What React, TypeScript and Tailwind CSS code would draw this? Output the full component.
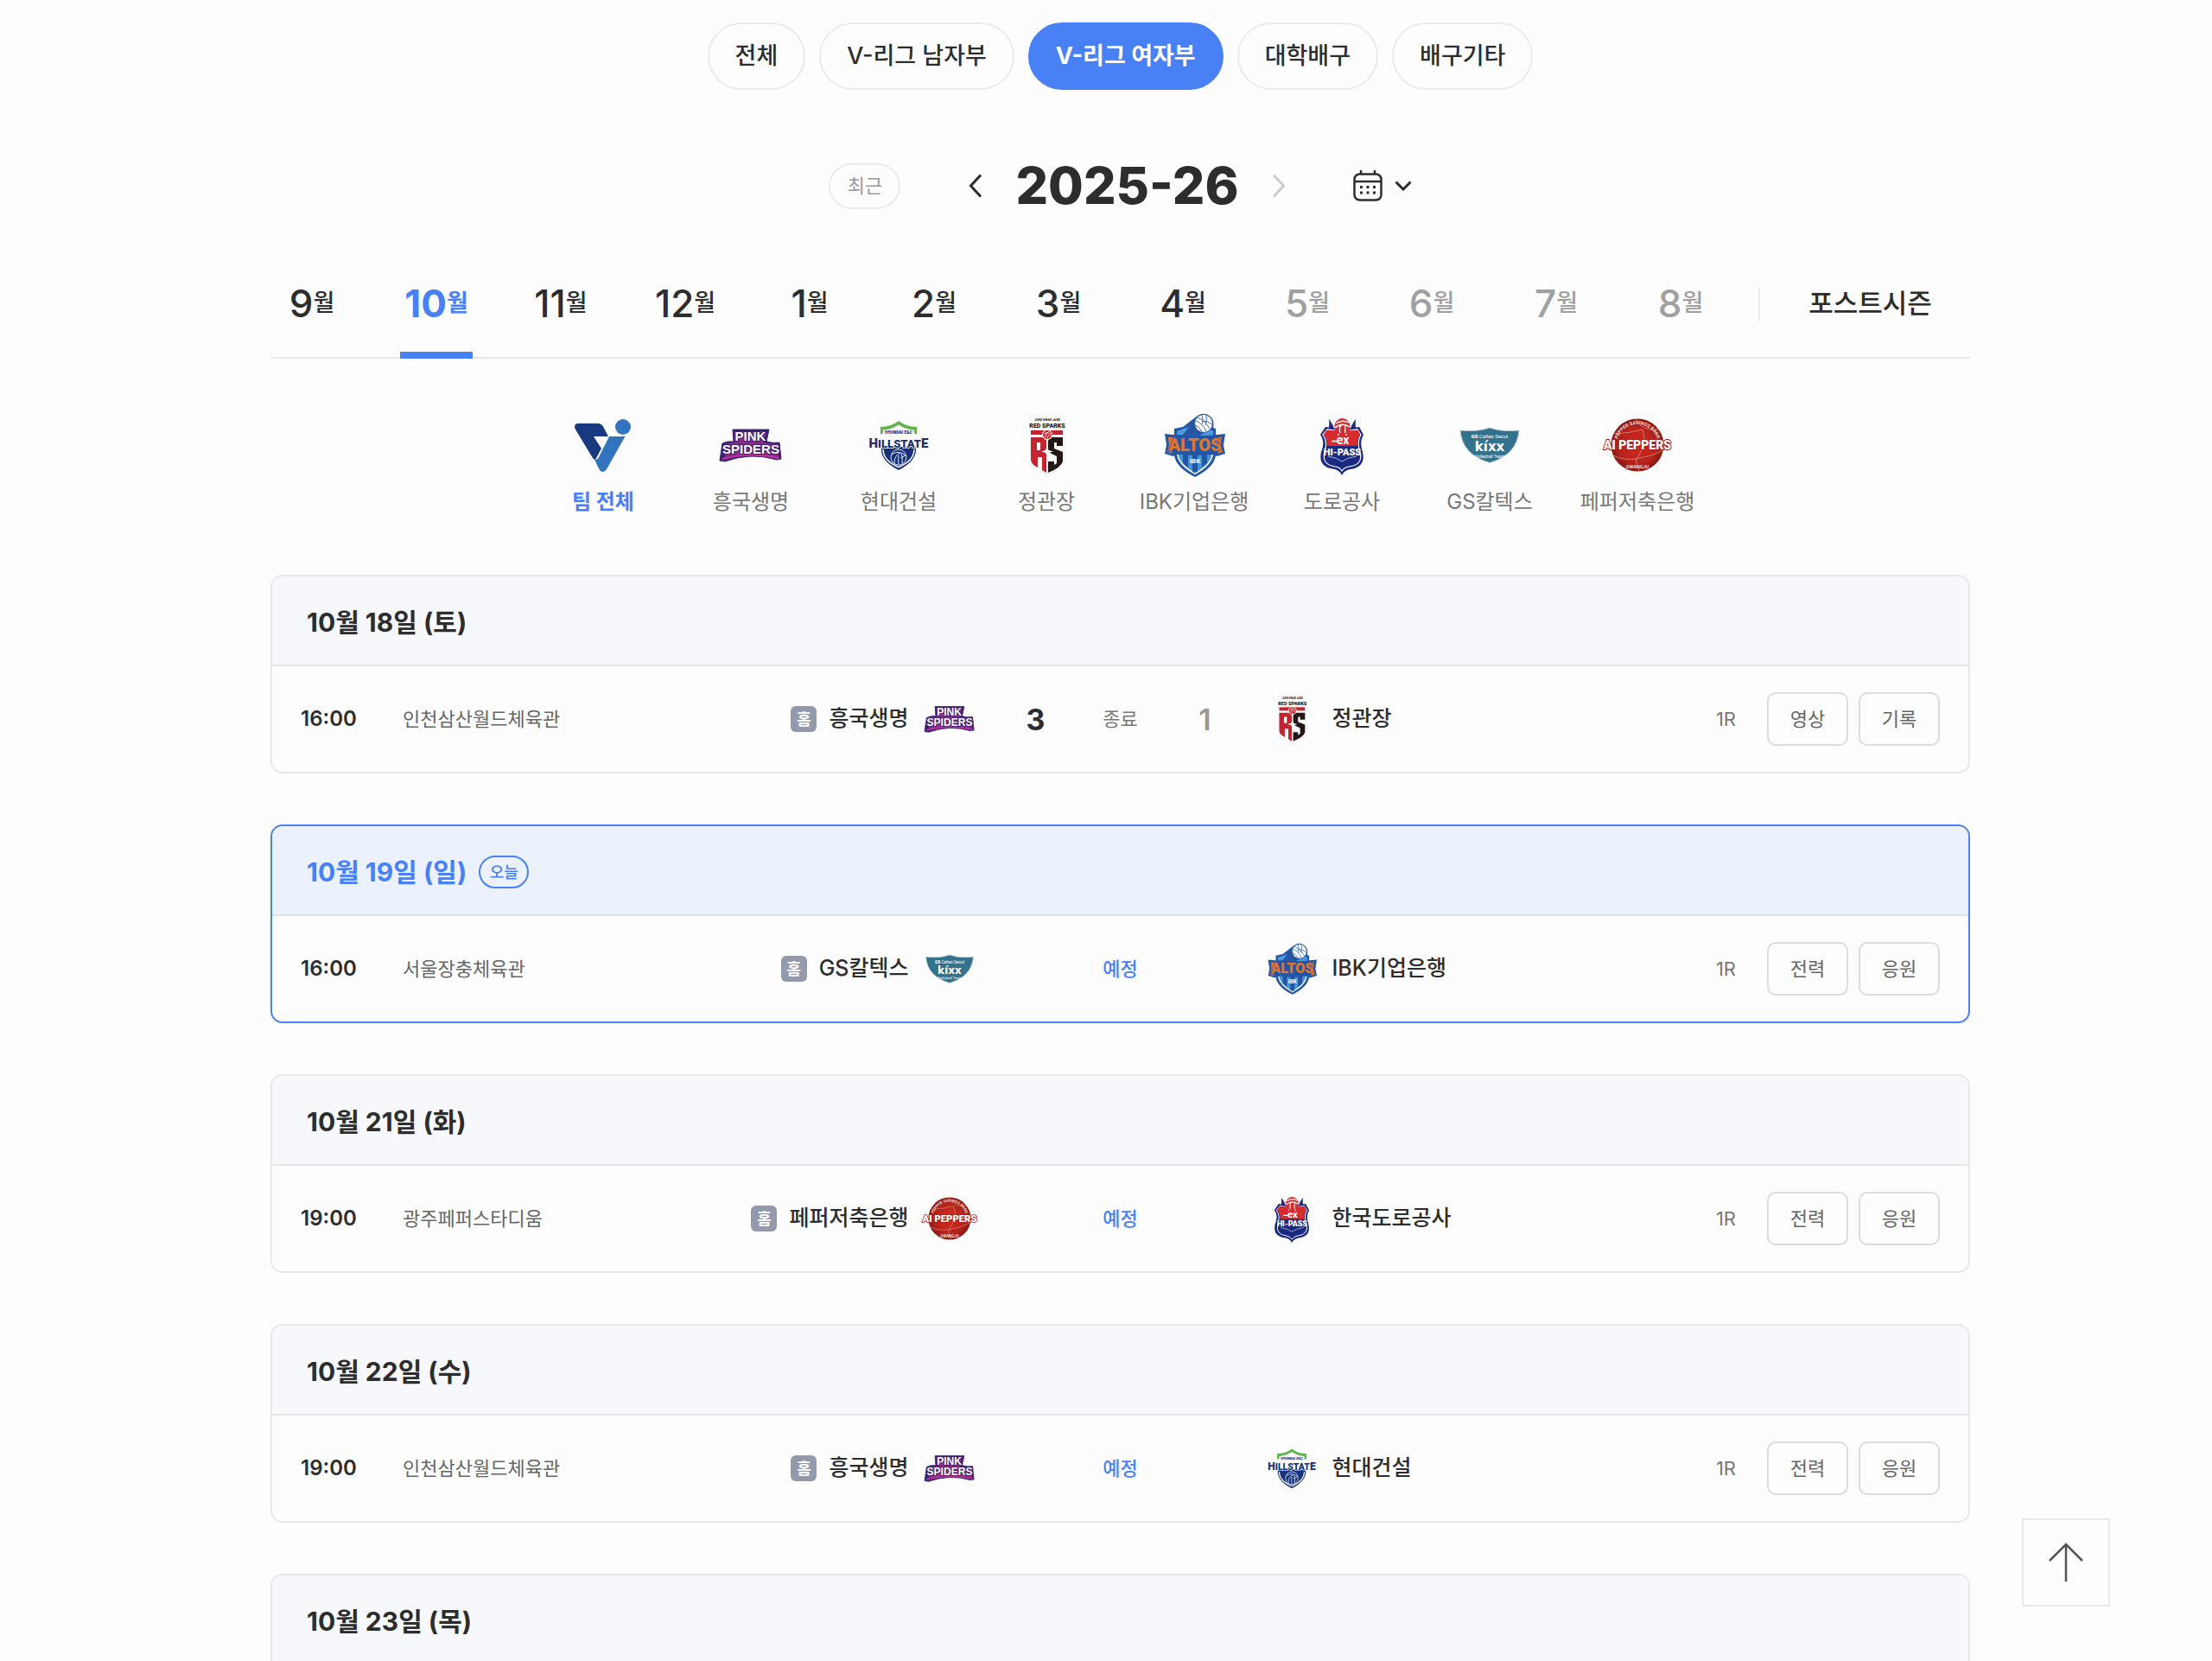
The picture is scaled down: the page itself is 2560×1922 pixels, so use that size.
import { useState } from "react";
import type { ReactNode } from "react";

type TeamId = "all" | "pink" | "hill" | "rs" | "altos" | "hipass" | "kixx" | "peppers";

type Match = {
  time: string;
  place: string;
  home: TeamId;
  homeName: string;
  away: TeamId;
  awayName: string;
  score?: [number, number];
  actions: string[];
};

type Day = { date: string; today?: boolean; matches: Match[] };

const leagues = ["전체", "V-리그 남자부", "V-리그 여자부", "대학배구", "배구기타"];

const months = [9, 10, 11, 12, 1, 2, 3, 4, 5, 6, 7, 8];
const disabledMonths = [5, 6, 7, 8];

const teams: { id: TeamId; name: string }[] = [
  { id: "all", name: "팀 전체" },
  { id: "pink", name: "흥국생명" },
  { id: "hill", name: "현대건설" },
  { id: "rs", name: "정관장" },
  { id: "altos", name: "IBK기업은행" },
  { id: "hipass", name: "도로공사" },
  { id: "kixx", name: "GS칼텍스" },
  { id: "peppers", name: "페퍼저축은행" },
];

const days: Day[] = [
  {
    date: "10월 18일 (토)",
    matches: [
      {
        time: "16:00",
        place: "인천삼산월드체육관",
        home: "pink",
        homeName: "흥국생명",
        away: "rs",
        awayName: "정관장",
        score: [3, 1],
        actions: ["영상", "기록"],
      },
    ],
  },
  {
    date: "10월 19일 (일)",
    today: true,
    matches: [
      {
        time: "16:00",
        place: "서울장충체육관",
        home: "kixx",
        homeName: "GS칼텍스",
        away: "altos",
        awayName: "IBK기업은행",
        actions: ["전력", "응원"],
      },
    ],
  },
  {
    date: "10월 21일 (화)",
    matches: [
      {
        time: "19:00",
        place: "광주페퍼스타디움",
        home: "peppers",
        homeName: "페퍼저축은행",
        away: "hipass",
        awayName: "한국도로공사",
        actions: ["전력", "응원"],
      },
    ],
  },
  {
    date: "10월 22일 (수)",
    matches: [
      {
        time: "19:00",
        place: "인천삼산월드체육관",
        home: "pink",
        homeName: "흥국생명",
        away: "hill",
        awayName: "현대건설",
        actions: ["전력", "응원"],
      },
    ],
  },
  { date: "10월 23일 (목)", matches: [] },
];

const logos: Record<TeamId, ReactNode> = {
  all: (
    <>
      <path d="M8 11H30Q34 11 36 14.500L42 26H25L34 40L27 53Q25 53 24 51L4 18Q1 11 8 11Z" fill="#16397f" />
      <path d="M43 26H61.500L40 64Q37 68.500 33 66Q31.500 65 26 52.500Q29 54 31 50Z" fill="#3274bd" />
      <circle cx="59" cy="15" r="9" fill="#3274bd" />
    </>
  ),
  pink: (
    <>
      <path
        d="M15 18H57L54 32Q62 34 69 33L71 52L66 53Q36 44 6 55L0 54L3 34Q9 31 16 32Z"
        fill="#3b1f6e"
        stroke="#3b2a74"
        strokeWidth="1"
      />
      <path d="M17 20H54L51 33Q61 35 68 35L68 49Q36 43 6 50L5 36Q10 33 18 33Z" fill="#8d2a86" />
      <path d="M3 52Q36 43 69 51" fill="none" stroke="#b8329a" strokeWidth="2.500" />
      <g fill="#fff" stroke="#3b1f6e" strokeWidth="2" paintOrder="stroke" textAnchor="middle" className="font-['Liberation_Sans'] font-bold">
        <text x="35.500" y="31" fontSize="15">PINK</text>
        <text x="36" y="46" fontSize="15">SPIDERS</text>
      </g>
    </>
  ),
  hill: (
    <>
      <path d="M15 24V15Q27 15 36 8Q45 15 57 15V24L54 22V18.500Q44 18 36 12.500Q28 18 18 18.500V22Z" fill="#62b34d" />
      <path d="M16 38H56Q58 54 36 65Q14 54 16 38Z" fill="#16307a" />
      <path d="M18 41Q18 54 36 61.500Q54 54 54 41" fill="none" stroke="#fff" strokeWidth="1.500" />
      <g fill="none" stroke="#dbe2f2" strokeWidth="1">
        <circle cx="36" cy="50" r="9" />
        <path d="M28 47Q36 41 44 48M31 57Q31 48 38 45M36 58Q35 51 36 48M40 57Q41 50 39 46M38 51L44 48" />
      </g>
      <g fill="#16307a" textAnchor="middle" className="font-['Roboto'] font-black">
        <text x="36" y="23" fontSize="5">HYUNDAI E&amp;C</text>
        <text x="36" y="39" fontSize="15" stroke="#fff" strokeWidth="1.500" paintOrder="stroke">
          <tspan fontSize="15">H</tspan>
          <tspan fontSize="13">ILLSTAT</tspan>
          <tspan fontSize="15">E</tspan>
        </text>
      </g>
    </>
  ),
  rs: (
    <>
      <path d="M17 3H57V56Q53 65 37 71Q20 65 17 56Z" fill="#fff" stroke="#efefef" strokeWidth="1" />
      <text x="37" y="7.500" fontSize="3.500" textAnchor="middle" fill="#231815" className="font-['Roboto'] font-bold">JUNG KWAN JANG</text>
      <text x="37" y="16" fontSize="7" textAnchor="middle" fill="#231815" className="font-['Roboto'] font-black">RED SPARKS</text>
      <path d="M18 19H55V24H18Z" fill="#c4242f" />
      <path d="M18 27H31Q36 27 36 32V40L34 43L36 46V68L31 65V50H26V62Q18 58 18 53ZM25 33V42H29V33Z" fill="#c4242f" fillRule="evenodd" />
      <path d="M38 32Q38 27 43 27H55V37H48V33H45V40L55 44V55Q53 62 38 68V55H45V59L48 57V49L38 44Z" fill="#231815" />
      <path d="M37 37L38.500 42L44 43.500L38.500 45L37 50L35.500 45L30 43.500L35.500 42Z" fill="#fff" />
      <circle cx="37" cy="24" r="6" fill="#fff" />
      <circle cx="37" cy="24" r="5" fill="#c4242f" />
      <path d="M33 23Q37 20 41 23M34 27Q36 22 39 20M37 28Q37 24 41 25" fill="none" stroke="#fff" strokeWidth="0.800" />
    </>
  ),
  altos: (
    <>
      <path d="M13 17L23 15L40 2Q48 -3 55 3Q60 8 58 16L61 17V48Q59 62 37 73Q15 62 13 48Z" fill="#2456a4" />
      <path d="M16 20L30 15L23 24H16ZM53 19H58V25H42Z" fill="#4b9be0" />
      <path d="M16 47H58Q56 60 37 70Q18 60 16 47Z" fill="#fff" />
      <path d="M17.500 47H56.500Q54 59 37 68Q20 59 17.500 47Z" fill="#4294d8" />
      <path d="M23 47H29V62L23 57ZM34 47H40V67L37 68L34 67ZM45 47H51V57L45 62Z" fill="#2456a4" />
      <path d="M2 23L12 24Q37 28 62 24L72 23L70 36L72 46L62 49L59 46Q37 50 15 46L12 49L2 46L4 36Z" fill="#2456a4" />
      <circle cx="47" cy="11" r="10.500" fill="#fff" stroke="#2456a4" strokeWidth="1" />
      <path d="M38 8Q45 10 50 20M40 4Q48 7 54 17M37 13Q42 14 45 21M45 1Q47 8 45 12M50 2Q51 8 49 13M57 12Q52 8 45 8" fill="none" stroke="#3c6bb0" strokeWidth="1" />
      <path d="M6 27H14L10 46L5 44L7 36ZM60 27H68L67 36L69 44L64 46Z" fill="#e2742c" />
      <text x="37" y="42.500" fontSize="20" textAnchor="middle" fill="#e2742c" stroke="#2456a4" strokeWidth="1.500" paintOrder="stroke" className="font-['Roboto'] font-black">ALTOS</text>
      <text x="37" y="57" fontSize="8" textAnchor="middle" fill="#fff" className="font-['Roboto'] font-bold">IBK</text>
    </>
  ),
  hipass: (
    <>
      <path d="M21 6Q26 12 28 20L20 19Q22 14 21 6ZM52 6Q47 12 45 20L53 19Q51 14 52 6Z" fill="#1b2a80" />
      <path d="M36 18L56 15L61 24Q56 32 60 44Q64 62 45 64Q38 66 36 71Q34 66 28 64Q8 62 12 44Q17 32 11 24L17 15Z" fill="#1b2a80" />
      <path d="M36 20L54 18L58 24Q53 32 57 44Q61 59 44 61Q38 62 36 66Q34 62 29 61Q12 59 16 44Q20 32 14 24L19 18Z" fill="none" stroke="#fff" strokeWidth="1.200" />
      <path d="M18 19H55L57 24Q53 30 54 37H19Q20 30 15 24Z" fill="#d62b2f" />
      <circle cx="36.500" cy="14" r="9" fill="#d62b2f" />
      <path d="M29 11Q36 6 44 10M28 16Q36 9 45 15M34 22Q32 16 36 12M40 22Q39 16 41 12" fill="none" stroke="#fff" strokeWidth="1.300" />
      <path d="M32 23V25M41 23V25M24 31.500H31" stroke="#fff" strokeWidth="1.300" />
      <text x="37" y="35" fontSize="14" textAnchor="middle" fill="#fff" className="font-['Roboto'] font-bold">ex</text>
      <text x="36.500" y="47.500" fontSize="11" textAnchor="middle" fill="#fff" className="font-['Roboto'] font-black">HI-PASS</text>
      <path d="M20 49Q29 50 36 55Q43 50 53 49" fill="none" stroke="#aeb6dc" strokeWidth="1" />
    </>
  ),
  kixx: (
    <>
      <path d="M2 19Q22 21 36 16Q50 21 70 19Q68 47 36 56.500Q4 47 2 19Z" fill="#32728d" stroke="#b9cdd6" strokeWidth="1" />
      <g fill="#fff" textAnchor="middle" className="font-['Roboto']">
        <text x="36" y="28" fontSize="6">
          <tspan fontWeight="900">GS</tspan> Caltex Seoul
        </text>
        <text x="36" y="43" fontSize="15" className="font-['DejaVu_Sans'] font-bold">kíxx</text>
        <text x="36" y="50.500" fontSize="5">Volleyball Team</text>
      </g>
    </>
  ),
  peppers: (
    <>
      <defs>
        <radialGradient id="pepperBall">
          <stop offset="0" stopColor="#d8281f" />
          <stop offset="0.700" stopColor="#b5231c" />
          <stop offset="1" stopColor="#8a1915" />
        </radialGradient>
      </defs>
      <path id="pepperArc" d="M12 36A24 24 0 0 1 60 36" fill="none" />
      <circle cx="36" cy="36" r="30.500" fill="url(#pepperBall)" />
      <path d="M34 6Q42 20 60 18M10 23Q28 22 42 18M42 18Q48 34 34 54M66 42Q50 50 34 52M34 52Q35 60 38 66M8 48Q20 54 34 52" fill="none" stroke="#d98d80" strokeWidth="0.800" />
      <text fontSize="5.500" fill="#f3d9d5" className="font-['Roboto'] font-bold">
        <textPath href="#pepperArc" startOffset="50%" textAnchor="middle">PEPPER SAVINGS BANK</textPath>
      </text>
      <text x="36" y="41" fontSize="14" textAnchor="middle" fill="#fff" stroke="#a8201b" strokeWidth="2" paintOrder="stroke" className="font-['Roboto'] font-black">AI PEPPERS</text>
      <text x="36" y="63" fontSize="5.500" textAnchor="middle" fill="#f3d9d5" className="font-['Roboto'] font-bold">GWANGJU</text>
    </>
  ),
};

function Logo({ id, className }: { id: TeamId; className: string }) {
  return (
    <svg viewBox="0 0 72 72" className={`shrink-0 overflow-visible ${className}`} aria-hidden="true">
      {logos[id]}
    </svg>
  );
}

function Chevron({ d, className }: { d: string; className: string }) {
  return (
    <svg viewBox="0 0 16 28" className={className} fill="none" stroke="currentColor" strokeWidth="3">
      <path d={d} />
    </svg>
  );
}

function CalendarIcon() {
  return (
    <svg viewBox="0 0 34 36" className="h-9 w-[34px]" fill="none" stroke="currentColor" strokeWidth="2.500">
      <rect x="1.500" y="4.500" width="31" height="30" rx="6" />
      <path d="M2 13H32M9 0V5M25 0V5" />
      <g fill="currentColor" stroke="none">
        <rect x="8" y="18" width="3" height="3" />
        <rect x="15.500" y="18" width="3" height="3" />
        <rect x="23" y="18" width="3" height="3" />
        <rect x="8" y="24.500" width="3" height="3" />
        <rect x="15.500" y="24.500" width="3" height="3" />
        <rect x="23" y="24.500" width="3" height="3" />
      </g>
    </svg>
  );
}

function MatchRow({ match }: { match: Match }) {
  return (
    <li className="grid h-[122px] grid-cols-[1fr_338px_1fr] items-center px-[33px]">
      <div className="flex items-center">
        <span className="w-[118px] text-[24px] font-semibold">{match.time}</span>
        <span className="text-[22px] text-[#666]">{match.place}</span>
        <span className="mr-3.5 ml-auto grid size-[30px] place-items-center rounded-md bg-[#929aab] text-[18px] font-bold text-white">
          홈
        </span>
        <span className="mr-4.5 text-[25px] font-medium">{match.homeName}</span>
        <Logo id={match.home} className="size-[58px]" />
      </div>
      {match.score ? (
        <div className="flex items-center justify-between px-[51px]">
          <span className="w-10 text-center text-[34px] font-bold">{match.score[0]}</span>
          <span className="text-[22px] text-[#777]">종료</span>
          <span className="w-10 text-center text-[34px] font-semibold text-[#999]">{match.score[1]}</span>
        </div>
      ) : (
        <span className="text-center text-[22px] font-medium text-[#4880f6]">예정</span>
      )}
      <div className="flex items-center">
        <Logo id={match.away} className="size-[58px]" />
        <span className="ml-4.5 text-[25px] font-medium">{match.awayName}</span>
        <span className="mr-9 ml-auto text-[22px] text-[#777]">1R</span>
        <div className="flex gap-3">
          {match.actions.map((action) => (
            <button key={action} type="button" className="h-[62px] w-[94px] rounded-[10px] border-2 border-[#dcdcdc] text-[22px] text-[#666]">
              {action}
            </button>
          ))}
        </div>
      </div>
    </li>
  );
}

function DayCard({ day }: { day: Day }) {
  return (
    <section className={`min-h-[230px] overflow-hidden rounded-[14px] border-2 ${day.today ? "border-[#4880f6]" : "border-[#e8e8e8]"}`}>
      <header
        className={`flex h-[104px] items-center gap-3.5 border-b-2 px-10 pt-1 ${
          day.today ? "border-[#dbe2ec] bg-[#ebf1fd] text-[#4880f6]" : "border-[#e5e6e8] bg-[#f7f8fc]"
        }`}
      >
        <h2 className="text-[30px] font-bold">{day.date}</h2>
        {day.today && (
          <span className="grid h-[38px] w-[58px] place-items-center rounded-full border-2 border-[#4880f6] text-[18px] font-medium">오늘</span>
        )}
      </header>
      <ul>
        {day.matches.map((match) => (
          <MatchRow key={match.time + match.home} match={match} />
        ))}
      </ul>
    </section>
  );
}

export default function App() {
  const [league, setLeague] = useState("V-리그 여자부");
  const [month, setMonth] = useState(10);
  const [team, setTeam] = useState<TeamId>("all");

  return (
    <div className="h-screen overflow-hidden bg-[#fdfdfd] pl-[33px] font-['Inter','Noto_Sans_CJK_KR',sans-serif] text-[#2d2d2d]">
      <main className="mx-auto max-w-[1967px] pt-[26px]">
        <nav className="flex justify-center gap-4">
          {leagues.map((name) => (
            <button
              key={name}
              type="button"
              onClick={() => setLeague(name)}
              className={`h-[78px] rounded-full border-2 px-[30px] text-[27px] ${
                league === name ? "border-[#4880f6] bg-[#4880f6] font-bold text-white" : "border-[#ebebeb] font-medium"
              }`}
            >
              {name}
            </button>
          ))}
        </nav>

        <div className="mt-[71px] flex h-20 items-center justify-center">
          <button type="button" className="mr-[79px] h-[53px] w-[83px] rounded-full border-2 border-[#ebebeb] text-[22px] text-[#999]">
            최근
          </button>
          <button type="button" aria-label="이전 시즌">
            <Chevron d="M14 1.500L2.500 14L14 26.500" className="h-7 w-4" />
          </button>
          <h1 className="mx-[38px] text-[59px] font-extrabold">2025-26</h1>
          <button type="button" aria-label="다음 시즌" disabled className="text-[#ccc]">
            <Chevron d="M2 1.500L13.500 14L2 26.500" className="h-7 w-4" />
          </button>
          <button type="button" aria-label="날짜 선택" className="ml-[78px] flex items-center gap-3.5">
            <CalendarIcon />
            <svg viewBox="0 0 20 12" className="h-3 w-5" fill="none" stroke="currentColor" strokeWidth="3">
              <path d="M1.500 1.500L10 10L18.500 1.500" />
            </svg>
          </button>
        </div>

        <nav className="mt-[45px] flex h-[115px] border-b-2 border-[#e9e9e9]">
          <div className="flex gap-12">
            {months.map((m) => (
              <button
                key={m}
                type="button"
                disabled={disabledMonths.includes(m)}
                onClick={() => setMonth(m)}
                className={`relative flex h-[107px] w-24 items-center justify-center pb-1.5 text-[44px] leading-none ${
                  disabledMonths.includes(m) ? "font-medium text-[#a0a0a0]" : month === m ? "font-bold text-[#4880f6]" : "font-medium"
                }`}
              >
                {m}
                <span className="text-[27px]">월</span>
                {month === m && <span className="absolute -bottom-2 left-1.5 h-2 w-[84px] bg-[#4880f6]" />}
              </button>
            ))}
          </div>
          <span className="mt-8 ml-[42px] h-10 w-0.5 bg-[#ebebeb]" />
          <button type="button" className="h-[102px] flex-1 pl-3 text-[31px] font-medium">
            포스트시즌
          </button>
        </nav>

        <ul className="mt-[64px] flex justify-center">
          {teams.map(({ id, name }) => (
            <li key={id} className="w-[171px]">
              <button
                type="button"
                onClick={() => setTeam(id)}
                className={`flex w-full flex-col items-center gap-3 text-[24px] leading-9 ${team === id ? "font-bold text-[#4880f6]" : "text-[#777]"}`}
              >
                <Logo id={id} className="size-[72px]" />
                {name}
              </button>
            </li>
          ))}
        </ul>

        <div className="mt-[66px] flex flex-col gap-[59px]">
          {days.map((day) => (
            <DayCard key={day.date} day={day} />
          ))}
        </div>
      </main>

      <a
        href="#root"
        aria-label="맨 위로"
        className="fixed right-[118px] bottom-[63px] grid size-[102px] place-items-center border-2 border-[#e8e8ec] bg-[#fdfdfd] text-[#555]"
      >
        <svg viewBox="0 0 40 46" className="h-[46px] w-10" fill="none" stroke="currentColor" strokeWidth="2.500">
          <path d="M20 45V2M1 21L20 2L39 21" />
        </svg>
      </a>
    </div>
  );
}
